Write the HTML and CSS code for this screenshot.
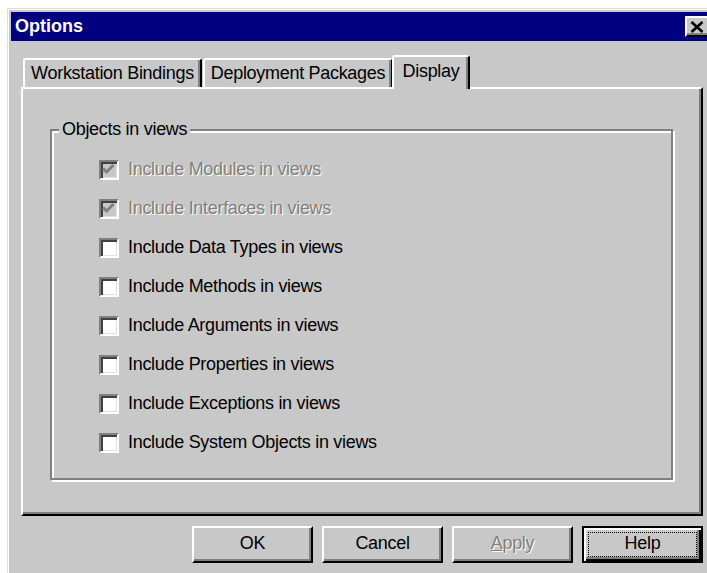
FILE: index.html
```html
<!DOCTYPE html>
<html lang="en">
<head>
<meta charset="utf-8">
<title>Options</title>
<link rel="stylesheet" href="styles.css">
</head>
<body>
<div class="window">
  <div class="titlebar">
    <span class="title">Options</span>
    <button class="close" aria-label="Close">
      <svg width="14" height="12" viewBox="0 0 14 12"><path d="M1.5 1 L12.5 11 M12.5 1 L1.5 11" stroke="#000" stroke-width="2.6" fill="none"/></svg>
    </button>
  </div>
  <div class="content">
    <div class="tabs">
      <div class="tab tab-ws">Workstation Bindings</div>
      <div class="tab tab-dp">Deployment Packages</div>
      <div class="tab tab-display active">Display</div>
    </div>
    <div class="panel">
      <div class="group">
        <div class="group-label">Objects in views</div>
        <div class="rows">
          <div class="row disabled">
            <span class="check"><svg width="16" height="16" viewBox="0 0 16 16"><path d="M2 6.5 L5.5 10 L12.5 3" stroke="#808080" stroke-width="3" fill="none"/></svg></span>
            <span class="text">Include Modules in views</span>
          </div>
          <div class="row disabled">
            <span class="check"><svg width="16" height="16" viewBox="0 0 16 16"><path d="M2 6.5 L5.5 10 L12.5 3" stroke="#808080" stroke-width="3" fill="none"/></svg></span>
            <span class="text">Include Interfaces in views</span>
          </div>
          <div class="row"><span class="check"></span><span class="text">Include Data Types in views</span></div>
          <div class="row"><span class="check"></span><span class="text">Include Methods in views</span></div>
          <div class="row"><span class="check"></span><span class="text">Include Arguments in views</span></div>
          <div class="row"><span class="check"></span><span class="text">Include Properties in views</span></div>
          <div class="row"><span class="check"></span><span class="text">Include Exceptions in views</span></div>
          <div class="row"><span class="check"></span><span class="text">Include System Objects in views</span></div>
        </div>
      </div>
    </div>
    <div class="buttons">
      <button class="btn">OK</button>
      <button class="btn">Cancel</button>
      <button class="btn" disabled><u>A</u>pply</button>
      <button class="btn default"><span class="focus">Help</span></button>
    </div>
  </div>
</div>
</body>
</html>
```
FILE: styles.css
```css
html, body {
  margin: 0;
  height: 100%;
  overflow: hidden;
  background: #fff;
}

body {
  font-family: "Liberation Sans", Arial, sans-serif;
  font-size: 18px;
  letter-spacing: -0.3px;
  color: #000;
}

/* dialog frame */
.window {
  box-sizing: border-box;
  width: 710px;
  height: 565px;
  margin: 8px 0 0 7px;
  padding: 3px 4px 0 3px;
  background: #c8c8c8;
  border-top: 1px solid #dcdcdc;
  border-left: 1px solid #dcdcdc;
  box-shadow: inset 1px 1px 0 #fff;
}

.titlebar {
  height: 29px;
  display: flex;
  align-items: center;
  justify-content: space-between;
  padding: 0 2px 0 4px;
  background: #000080;
  color: #fff;
}

.title {
  font-weight: bold;
  letter-spacing: 0;
}

.close {
  box-sizing: border-box;
  width: 26px;
  height: 21px;
  padding: 0;
  display: flex;
  align-items: center;
  justify-content: center;
  background: #c8c8c8;
  border: 2px solid;
  border-color: #fff #000 #000 #fff;
  box-shadow: inset -2px -2px 0 #808080;
}

.close svg {
  display: block;
  margin: 0 2px 0 0;
}

.content {
  padding: 14px 10px 0;
}

/* tab strip */
.tabs {
  display: flex;
  align-items: flex-end;
  height: 32px;
  padding-left: 2px;
}

.tab {
  box-sizing: border-box;
  height: 29px;
  display: flex;
  align-items: center;
  justify-content: center;
  margin-right: 1px;
  background: #c8c8c8;
  border-top: 2px solid #fff;
  border-left: 2px solid #fff;
  border-right: 2px solid #000;
  border-radius: 3px 3px 0 0;
  box-shadow: inset -2px 0 0 #808080;
}

.tab-ws { width: 179px; }
.tab-dp { width: 190px; }
.tab-display { width: 74px; }

.tab.active {
  position: relative;
  z-index: 1;
  width: 78px;
  height: 34px;
  margin: 0 -2px -2px -2px;
  padding-bottom: 4px;
}

/* page of the tab control */
.panel {
  box-sizing: border-box;
  height: 429px;
  border: 2px solid;
  border-color: #fff #000 #000 #fff;
  box-shadow: inset -2px -2px 0 #808080;
}

.group {
  box-sizing: border-box;
  width: 623px;
  margin: 40px 0 0 27px;
  border: 2px solid #808080;
  box-shadow: inset 2px 2px 0 #fff, 2px 2px 0 #fff;
}

.group-label {
  width: max-content;
  margin: -12px 0 0 7px;
  padding: 0 3px;
  line-height: 20px;
  background: #c8c8c8;
}

.rows {
  padding: 11px 0 16px 47px;
}

.row {
  display: flex;
  align-items: center;
  gap: 9px;
  height: 39px;
}

.check {
  box-sizing: border-box;
  flex: none;
  width: 20px;
  height: 20px;
  background: #fff;
  border: 2px solid;
  border-color: #808080 #fff #fff #808080;
  box-shadow: inset 2px 2px 0 #404040, inset -1px -1px 0 #dfdfdf;
}

.check svg {
  display: block;
}

.row.disabled .check {
  background: #c8c8c8;
}

.row.disabled .text {
  color: #808080;
  text-shadow: 1px 1px 0 #fff;
}

/* command buttons */
.buttons {
  display: flex;
  justify-content: flex-end;
  gap: 9px;
  margin-top: 10px;
}

.btn {
  box-sizing: border-box;
  width: 121px;
  height: 37px;
  padding: 0 0 2px;
  font: inherit;
  letter-spacing: inherit;
  color: #000;
  background: #c8c8c8;
  border: 2px solid;
  border-color: #fff #000 #000 #fff;
  box-shadow: inset -2px -2px 0 #808080;
}

.btn:disabled {
  color: #808080;
  text-shadow: 1px 1px 0 #fff;
}

.btn.default {
  padding: 4px;
  border-color: #000;
  box-shadow: inset 2px 2px 0 #fff, inset -2px -2px 0 #000, inset -4px -4px 0 #808080;
}

.focus {
  box-sizing: border-box;
  display: flex;
  align-items: center;
  justify-content: center;
  height: 100%;
  padding-bottom: 2px;
  border: 1px dotted #000;
}
```
